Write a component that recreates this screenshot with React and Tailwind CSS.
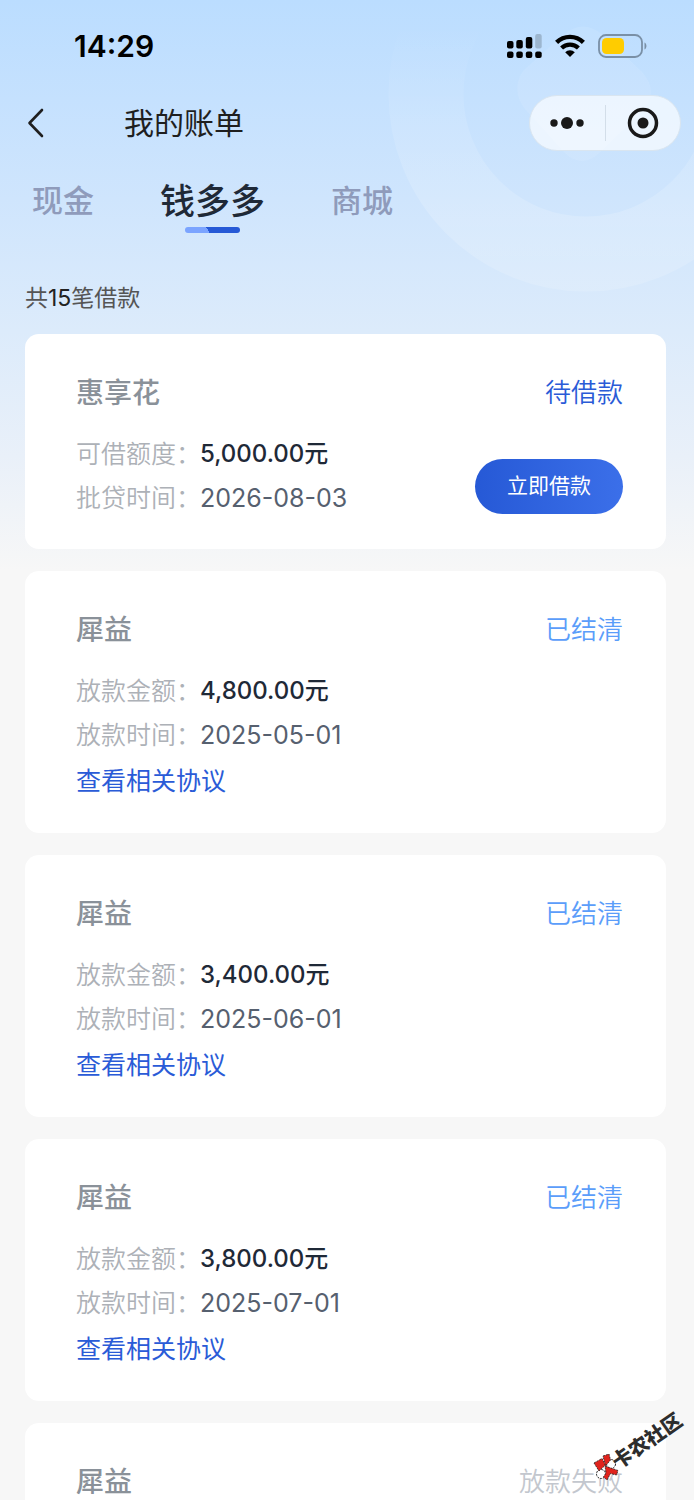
import React, { useState } from "react";

const tabs = ["现金", "钱多多", "商城"];

const loans = [
  {
    id: 1,
    name: "惠享花",
    status: "pending",
    amountLabel: "可借额度：",
    amount: "5,000.00元",
    dateLabel: "批贷时间：",
    date: "2026-08-03",
  },
  {
    id: 2,
    name: "犀益",
    status: "settled",
    amountLabel: "放款金额：",
    amount: "4,800.00元",
    dateLabel: "放款时间：",
    date: "2025-05-01",
  },
  {
    id: 3,
    name: "犀益",
    status: "settled",
    amountLabel: "放款金额：",
    amount: "3,400.00元",
    dateLabel: "放款时间：",
    date: "2025-06-01",
  },
  {
    id: 4,
    name: "犀益",
    status: "settled",
    amountLabel: "放款金额：",
    amount: "3,800.00元",
    dateLabel: "放款时间：",
    date: "2025-07-01",
  },
  { id: 5, name: "犀益", status: "failed" },
];

const statusText = {
  pending: "待借款",
  settled: "已结清",
  failed: "放款失败",
};

const statusColor = {
  pending: "text-[#2a5bd7]",
  settled: "text-[#5b9dfa]",
  failed: "text-[#c3c7ce]",
};

function StatusBar() {
  return (
    <div className="flex h-[92px] items-center justify-between pr-[47px] pl-[74px] text-black">
      <span className="text-[30px] font-semibold">14:29</span>
      <div className="flex items-center gap-[13px]">
        <svg width="35" height="24" viewBox="0 0 35 24" aria-hidden="true">
          <rect x="0" y="7" width="6.500" height="7.500" rx="2" />
          <rect x="9.300" y="6" width="6.500" height="8.500" rx="2" />
          <rect x="18.800" y="3" width="6.500" height="11.500" rx="2" />
          <rect x="28.200" y="0" width="6.500" height="14.500" rx="2" fill="#9cb6cf" />
          <rect x="0" y="17.500" width="6.500" height="6.500" rx="2" />
          <rect x="9.300" y="17.500" width="6.500" height="6.500" rx="2" />
          <rect x="18.800" y="17.500" width="6.500" height="6.500" rx="2" />
          <rect x="28.200" y="17.500" width="6.500" height="6.500" rx="2" />
        </svg>
        <svg width="30" height="24" viewBox="0 0 30 24" aria-hidden="true">
          <path d="M1.600 8.400a19 19 0 0 1 26.800 0" fill="none" stroke="#000" strokeWidth="4.400" />
          <path d="M6.600 14a12 12 0 0 1 16.800 0" fill="none" stroke="#000" strokeWidth="4.200" />
          <path d="M15 23l-4.800-4.700a6.800 6.800 0 0 1 9.600 0z" />
        </svg>
        <svg width="49" height="24" viewBox="0 0 49 24" aria-hidden="true">
          <rect x="1" y="1" width="43" height="22" rx="7" fill="none" stroke="#7a90a6" strokeWidth="1.800" />
          <rect x="4" y="4" width="22" height="16" rx="4.500" fill="#ffcc00" />
          <path d="M46.500 8.500c2.600 1.200 2.600 5.800 0 7z" fill="#7a90a6" />
        </svg>
      </div>
    </div>
  );
}

function NavBar() {
  return (
    <header className="flex h-[62px] items-center pr-[13px] pl-[27px]">
      <button type="button" aria-label="返回" className="w-[97px]">
        <svg width="17" height="30" viewBox="0 0 17 30" fill="none" aria-hidden="true">
          <path d="M15 2L2.500 15 15 28" stroke="#1f1f1f" strokeWidth="2.600" strokeLinecap="round" strokeLinejoin="round" />
        </svg>
      </button>
      <h1 className="text-[30px] leading-[40px] text-[#1f1f1f]">我的账单</h1>
      <div className="ml-auto flex h-14 w-[152px] items-center rounded-full border border-[#d9e5f0] bg-white/65">
        <button type="button" aria-label="更多" className="flex flex-1 justify-center">
          <svg width="34" height="14" viewBox="0 0 34 14" fill="#191919" aria-hidden="true">
            <circle cx="4" cy="7" r="3.700" />
            <circle cx="17" cy="7" r="6" />
            <circle cx="30" cy="7" r="3.700" />
          </svg>
        </button>
        <span className="h-9 w-px bg-[#d3dee9]" />
        <button type="button" aria-label="关闭" className="flex flex-1 justify-center">
          <svg width="32" height="32" viewBox="0 0 32 32" aria-hidden="true">
            <circle cx="16" cy="16" r="13.500" fill="none" stroke="#191919" strokeWidth="3.500" />
            <circle cx="16" cy="16" r="5.500" fill="#191919" />
          </svg>
        </button>
      </div>
    </header>
  );
}

function LoanCard({ loan }) {
  return (
    <li className="rounded-[14px] bg-white pt-[39px] pr-[43px] pb-[29px] pl-[51px]">
      <div className="flex items-center justify-between leading-[40px]">
        <h2 className="text-[28px] font-medium text-[#8a9199]">{loan.name}</h2>
        <span className={`text-[26px] font-[350] ${statusColor[loan.status]}`}>
          {statusText[loan.status]}
        </span>
      </div>
      {loan.amount && (
        <div className="mt-[19px] flex items-center justify-between">
          <dl className="grid grid-cols-[124px_auto] text-[25px] leading-[44px] whitespace-nowrap">
            <dt className="font-[350] text-[#adb1b7]">{loan.amountLabel}</dt>
            <dd className="text-[24px] font-medium text-[#1f2937]">{loan.amount}</dd>
            <dt className="font-[350] text-[#adb1b7]">{loan.dateLabel}</dt>
            <dd className="text-[#56606f]">{loan.date}</dd>
          </dl>
          {loan.status === "pending" && (
            <button
              type="button"
              className="mt-5 h-[55px] w-[148px] rounded-full bg-linear-to-r from-[#2659d6] to-[#3b6fe9] text-[21px] text-white"
            >
              立即借款
            </button>
          )}
        </div>
      )}
      {loan.status === "settled" && (
        <a href="#" className="block pt-[2px] text-[25px] leading-[45px] text-[#2a5bd7]">
          查看相关协议
        </a>
      )}
    </li>
  );
}

function Watermark() {
  return (
    <div className="absolute right-[5px] bottom-[18px] h-[72px] w-[96px]">
      <svg className="absolute bottom-0 left-0" width="28" height="28" viewBox="0 0 28 28" aria-hidden="true">
        <g fill="#fff" stroke="#222" strokeWidth="1" strokeDasharray="2 1">
          <circle cx="18" cy="10" r="4.500" />
          <circle cx="8" cy="20" r="4.500" />
        </g>
        <g fill="#e0231c" stroke="#222" strokeWidth="0.800" strokeDasharray="2 1">
          <path d="M1 9l8-4.500L12.500 11 6 17z" />
          <path d="M10 2l6-2 1.500 6-5 6z" />
          <path d="M12 12l13 4.500-1.500 4.500-6-1.500-3.500 6.500-3.500-3 2.500-4z" />
        </g>
      </svg>
      <span className="absolute top-[16px] left-[14px] -rotate-35 text-[20px] leading-[30px] font-black whitespace-nowrap text-[#2d2d2d]">
        卡农社区
      </span>
    </div>
  );
}

export default function App() {
  const [active, setActive] = useState("钱多多");

  return (
    <div className="relative h-screen overflow-hidden bg-[#f7f7f7] font-['Inter','Noto_Sans_CJK_SC',sans-serif]">
      {/* sky gradient with the ring decoration */}
      <div className="absolute inset-x-0 top-0 h-[570px] overflow-hidden bg-[linear-gradient(180deg,#bbddff_0%,#cfe5fd_35%,#dcebfb_58%,#e9f0f9_80%,#f7f7f7_100%)]">
        <svg className="absolute top-0 right-0" width="314" height="300" viewBox="0 0 314 300" aria-hidden="true">
          <defs>
            <linearGradient id="ring" gradientUnits="userSpaceOnUse" x1="0" y1="0" x2="0" y2="292">
              <stop offset="0.080" stopColor="#fff" stopOpacity="0" />
              <stop offset="0.400" stopColor="#fff" stopOpacity="0.100" />
              <stop offset="0.750" stopColor="#fff" stopOpacity="0.170" />
              <stop offset="1" stopColor="#fff" stopOpacity="0.140" />
            </linearGradient>
          </defs>
          <circle cx="206" cy="94" r="160" fill="none" stroke="url(#ring)" strokeWidth="75" />
          <path
            d="M143 71L183 35Q203 18 223 35L262 72Q280 92 262 112L219 153Q202 169 185 153L144 108Q131 89 143 71z"
            fill="#fff"
            fillOpacity="0.090"
          />
        </svg>
      </div>

      <div className="relative">
        <StatusBar />
        <NavBar />

        <nav className="mt-[23px] flex gap-[66px] px-8">
          {tabs.map((tab) => (
            <button
              key={tab}
              type="button"
              onClick={() => setActive(tab)}
              className="flex h-14 flex-col items-center gap-[2px] leading-[48px]"
            >
              <span
                className={
                  active === tab
                    ? "text-[35px] font-medium text-[#1f2937]"
                    : "text-[31px] font-medium text-[#8f9bbb]"
                }
              >
                {tab}
              </span>
              {active === tab && (
                <span className="h-[6px] w-[55px] rounded-full bg-[linear-gradient(60deg,#7ba4ff_42%,#2659d6_42%)]" />
              )}
            </button>
          ))}
        </nav>

        <main className="mt-[49px] pr-[28px] pl-[25px]">
          <p className="text-[23px] leading-[32px] text-[#555]">
            共<span className="text-[#222]">15</span>笔借款
          </p>
          <ul className="mt-5 flex flex-col gap-[22px]">
            {loans.map((loan) => (
              <LoanCard key={loan.id} loan={loan} />
            ))}
          </ul>
        </main>
      </div>

      <Watermark />
    </div>
  );
}
